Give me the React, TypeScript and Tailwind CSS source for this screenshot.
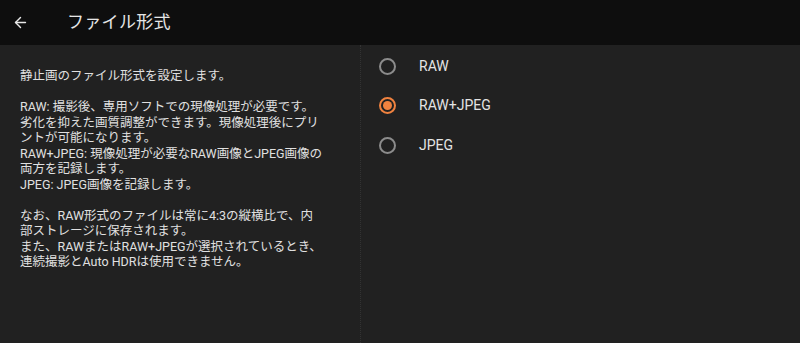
import { useState } from 'react';
import { ArrowLeft } from 'lucide-react';

const options = ['RAW', 'RAW+JPEG', 'JPEG'];

const lines = [
  '静止画のファイル形式を設定します。',
  '',
  'RAW: 撮影後、専用ソフトでの現像処理が必要です。',
  '劣化を抑えた画質調整ができます。現像処理後にプリ',
  'ントが可能になります。',
  'RAW+JPEG: 現像処理が必要なRAW画像とJPEG画像の',
  '両方を記録します。',
  'JPEG: JPEG画像を記録します。',
  '',
  'なお、RAW形式のファイルは常に4:3の縦横比で、内',
  '部ストレージに保存されます。',
  'また、RAWまたはRAW+JPEGが選択されているとき、',
  '連続撮影とAuto HDRは使用できません。',
];

function App() {
  const [selected, setSelected] = useState('RAW+JPEG');

  return (
    <div
      className="w-[800px] h-[343px] bg-[#212121] flex flex-col overflow-hidden"
      style={{ fontFamily: 'Roboto, "Noto Sans CJK JP", sans-serif' }}
    >
      <div className="h-[45px] bg-[#0e0e0e] flex items-center shrink-0">
        <button className="w-[38px] pl-[12px] text-[#e8e8e8] flex items-center">
          <ArrowLeft size={17} strokeWidth={2} />
        </button>
        <h1 className="ml-[29px] text-[17px] text-[#e6e6e6] tracking-[0.3px]">ファイル形式</h1>
      </div>

      <div className="flex flex-1">
        <div className="w-[361px] border-r border-dotted border-[#333333] pt-[23px] pl-[20px] text-[12.5px] leading-[15.5px] text-[#e0e0e0]">
          {lines.map((line, i) => (
            <div key={i} className="whitespace-nowrap h-[15.5px]">
              {line}
            </div>
          ))}
        </div>

        <div className="flex-1 pt-[1.5px]">
          {options.map((opt) => {
            const active = selected === opt;
            return (
              <button
                key={opt}
                onClick={() => setSelected(opt)}
                className="flex items-center h-[39.5px] w-full pl-[18px]"
              >
                <span
                  className={`w-[17px] h-[17px] rounded-full border-2 flex items-center justify-center ${
                    active ? 'border-[#f0823f]' : 'border-[#8c8c8c]'
                  }`}
                >
                  {active && <span className="w-[9px] h-[9px] rounded-full bg-[#f0823f]" />}
                </span>
                <span className="ml-[23px] text-[14px] text-[#e4e4e4]">{opt}</span>
              </button>
            );
          })}
        </div>
      </div>
    </div>
  );
}

export default App;
